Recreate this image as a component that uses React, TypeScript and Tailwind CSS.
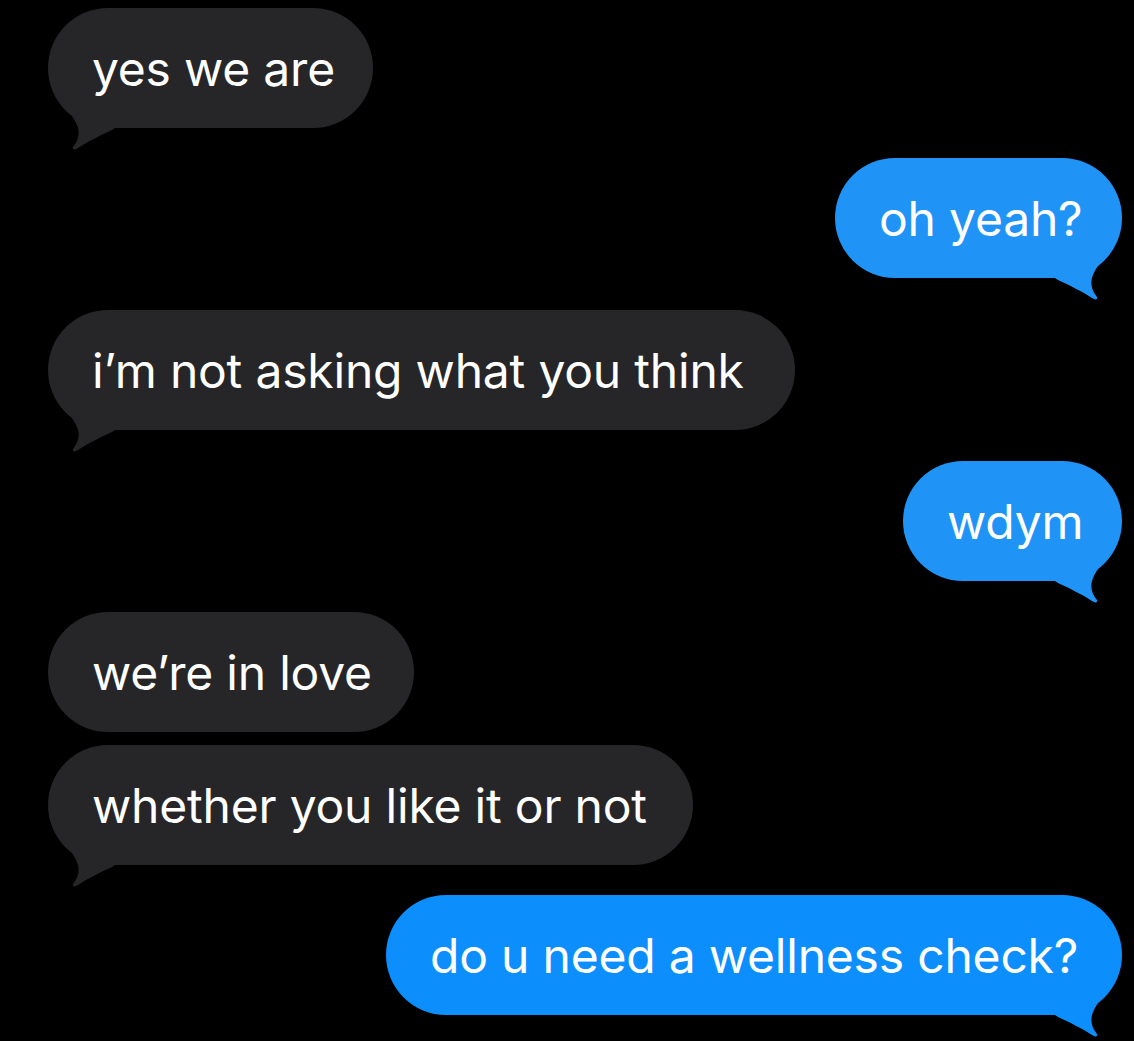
import React from "react";

type Msg = { text: string; me: boolean; box: string; bg: string; fill: string; tail: boolean };

const msgs: Msg[] = [
  { text: "yes we are", me: false, box: "self-start w-[325px] mt-[8px]", bg: "bg-[#262629]", fill: "text-[#262629]", tail: true },
  { text: "oh yeah?", me: true, box: "self-end w-[287px] mt-[30px]", bg: "bg-[#2094f6]", fill: "text-[#2094f6]", tail: true },
  { text: "i\u2019m not asking what you think", me: false, box: "self-start w-[747px] mt-[32px]", bg: "bg-[#262629]", fill: "text-[#262629]", tail: true },
  { text: "wdym", me: true, box: "self-end w-[219px] mt-[31px]", bg: "bg-[#2094f6]", fill: "text-[#2094f6]", tail: true },
  { text: "we\u2019re in love", me: false, box: "self-start w-[366px] mt-[31px]", bg: "bg-[#262629]", fill: "text-[#262629]", tail: false },
  { text: "whether you like it or not", me: false, box: "self-start w-[645px] mt-[13px]", bg: "bg-[#262629]", fill: "text-[#262629]", tail: true },
  { text: "do u need a wellness check?", me: true, box: "self-end w-[736px] mt-[30px]", bg: "bg-[#0c8ffd]", fill: "text-[#0c8ffd]", tail: true },
];

function Tail({ fill, mirror }: { fill: string; mirror: boolean }) {
  return (
    <svg
      width="67"
      height="60"
      viewBox="0 0 67 60"
      className={
        (mirror ? "absolute left-0 bottom-[-22px] -scale-x-100 " : "absolute right-0 bottom-[-22px] ") + fill
      }
    >
      <path
        d="M 0 38 L 3 40 C 14 45 28 52 37 58 C 40 60 43 60 42 57 C 36 50 35 42 38 35 C 42 25 53 14 62 0 L 0 0 Z"
        fill="currentColor"
      />
    </svg>
  );
}

export default function App() {
  return (
    <div className="w-full h-[1041px] bg-black overflow-hidden flex flex-col pl-[48px] pr-[12px] [font-family:Inter,'Liberation_Sans',sans-serif]">
      {msgs.map((m, i) => (
        <div key={i} className={"relative h-[120px] shrink-0 " + m.box}>
          {m.tail && <Tail fill={m.fill} mirror={!m.me} />}
          <div
            className={
              "relative h-full rounded-[60px] flex items-center pl-[44px] text-white text-[48px] whitespace-nowrap tracking-[-0.2px] " +
              m.bg
            }
          >
            <span className="relative top-[1px]">{m.text}</span>
          </div>
        </div>
      ))}
    </div>
  );
}
